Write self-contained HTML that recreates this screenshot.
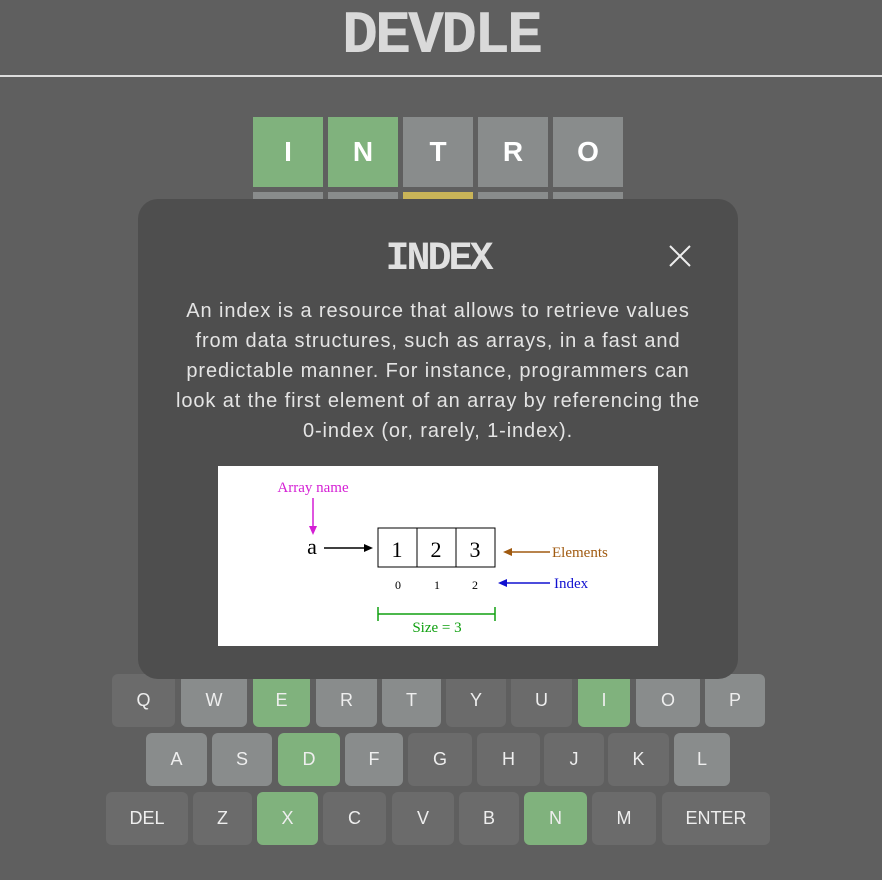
<!DOCTYPE html>
<html><head><style>
body{margin:0;width:882px;height:880px;background:#5f5f5f;position:relative;overflow:hidden;font-family:"Liberation Sans",sans-serif}
.h{position:absolute;left:0;top:0;width:882px;height:75px;border-bottom:2px solid #ddd;box-sizing:content-box}
.h div{text-align:center;font:bold 60px/74px "Liberation Mono",monospace;color:#d9d9d9;letter-spacing:-3px}
.t{position:absolute;width:70px;height:70px;color:#fff;font-weight:bold;font-size:28px;display:flex;align-items:center;justify-content:center}
.k{position:absolute;height:53px;border-radius:6px;color:#eee;font-size:18px;display:flex;align-items:center;justify-content:center;background:#6b6b6b}
.g,.k.g{background:#80b27d}.d,.k.d{background:#898c8c}.y{background:#c9b458}
.modal{position:absolute;left:138px;top:199px;width:600px;height:480px;background:#4e4e4e;border-radius:20px}
</style></head><body>
<div class="h"><div>DEVDLE</div></div>
<div class="t g" style="left:253px;top:117px">I</div>
<div class="t g" style="left:328px;top:117px">N</div>
<div class="t d" style="left:403px;top:117px">T</div>
<div class="t d" style="left:478px;top:117px">R</div>
<div class="t d" style="left:553px;top:117px">O</div>
<div class="t d" style="left:253px;top:192px"></div>
<div class="t d" style="left:328px;top:192px"></div>
<div class="t y" style="left:403px;top:192px"></div>
<div class="t d" style="left:478px;top:192px"></div>
<div class="t d" style="left:553px;top:192px"></div>

<div class="k" style="left:112px;top:674px;width:63px">Q</div>
<div class="k d" style="left:181px;top:674px;width:66px">W</div>
<div class="k g" style="left:253px;top:674px;width:57px">E</div>
<div class="k d" style="left:316px;top:674px;width:61px">R</div>
<div class="k d" style="left:382px;top:674px;width:59px">T</div>
<div class="k" style="left:446px;top:674px;width:60px">Y</div>
<div class="k" style="left:511px;top:674px;width:61px">U</div>
<div class="k g" style="left:578px;top:674px;width:52px">I</div>
<div class="k d" style="left:636px;top:674px;width:64px">O</div>
<div class="k d" style="left:705px;top:674px;width:60px">P</div>

<div class="k d" style="left:146px;top:733px;width:61px">A</div>
<div class="k d" style="left:212px;top:733px;width:60px">S</div>
<div class="k g" style="left:278px;top:733px;width:62px">D</div>
<div class="k d" style="left:345px;top:733px;width:58px">F</div>
<div class="k" style="left:408px;top:733px;width:64px">G</div>
<div class="k" style="left:477px;top:733px;width:63px">H</div>
<div class="k" style="left:544px;top:733px;width:60px">J</div>
<div class="k" style="left:608px;top:733px;width:61px">K</div>
<div class="k d" style="left:674px;top:733px;width:56px">L</div>

<div class="k" style="left:106px;top:792px;width:82px">DEL</div>
<div class="k" style="left:193px;top:792px;width:59px">Z</div>
<div class="k g" style="left:257px;top:792px;width:61px">X</div>
<div class="k" style="left:323px;top:792px;width:63px">C</div>
<div class="k" style="left:392px;top:792px;width:62px">V</div>
<div class="k" style="left:459px;top:792px;width:60px">B</div>
<div class="k g" style="left:524px;top:792px;width:63px">N</div>
<div class="k" style="left:592px;top:792px;width:64px">M</div>
<div class="k" style="left:662px;top:792px;width:108px">ENTER</div>

<div class="modal">
<div style="position:absolute;left:0;width:600px;top:38px;text-align:center;font:bold 40px/46px 'Liberation Mono',monospace;color:#e0e0e0;letter-spacing:-3px">INDEX</div>
<svg style="position:absolute;left:531px;top:46px" width="22" height="22"><path d="M1 1L21 21M21 1L1 21" stroke="#eee" stroke-width="2"/></svg>
<div style="position:absolute;left:0;width:600px;top:97px;text-align:center;color:#e4e4e4;font-size:20px;letter-spacing:0.9px;line-height:30px;white-space:nowrap">An index is a resource that allows to retrieve values<br>from data structures, such as arrays, in a fast and<br>predictable manner. For instance, programmers can<br>look at the first element of an array by referencing the<br>0-index (or, rarely, 1-index).</div>
<svg style="position:absolute;left:80px;top:267px" width="440" height="180" font-family="Liberation Serif,serif">
<rect width="440" height="180" fill="#fff"/>
<text x="95" y="26" fill="#d41ed4" font-size="15" text-anchor="middle">Array name</text>
<path d="M95 32V64" stroke="#d41ed4" stroke-width="1.5"/><path d="M91 60L95 69L99 60Z" fill="#d41ed4"/>
<text x="94" y="88" font-size="22" text-anchor="middle">a</text>
<path d="M106 82H150" stroke="#000" stroke-width="1.5"/><path d="M146 78L155 82L146 86Z"/>
<rect x="160" y="62" width="117" height="39" fill="none" stroke="#000"/>
<path d="M199 62V101M238 62V101" stroke="#000"/>
<text x="179" y="91" font-size="22" text-anchor="middle">1</text>
<text x="218" y="91" font-size="22" text-anchor="middle">2</text>
<text x="257" y="91" font-size="22" text-anchor="middle">3</text>
<path d="M290 86H332" stroke="#a05a10" stroke-width="1.5"/><path d="M294 82L285 86L294 90Z" fill="#a05a10"/>
<text x="334" y="91" fill="#a05a10" font-size="15">Elements</text>
<text x="180" y="123" font-size="12" text-anchor="middle">0</text>
<text x="219" y="123" font-size="12" text-anchor="middle">1</text>
<text x="257" y="123" font-size="12" text-anchor="middle">2</text>
<path d="M285 117H332" stroke="#1010d0" stroke-width="1.5"/><path d="M289 113L280 117L289 121Z" fill="#1010d0"/>
<text x="336" y="122" fill="#1010d0" font-size="15">Index</text>
<path d="M160 148H277M160 141V155M277 141V155" stroke="#10a010" stroke-width="1.5"/>
<text x="219" y="166" fill="#10a010" font-size="15" text-anchor="middle">Size = 3</text>
</svg>
</div>
</body></html>
